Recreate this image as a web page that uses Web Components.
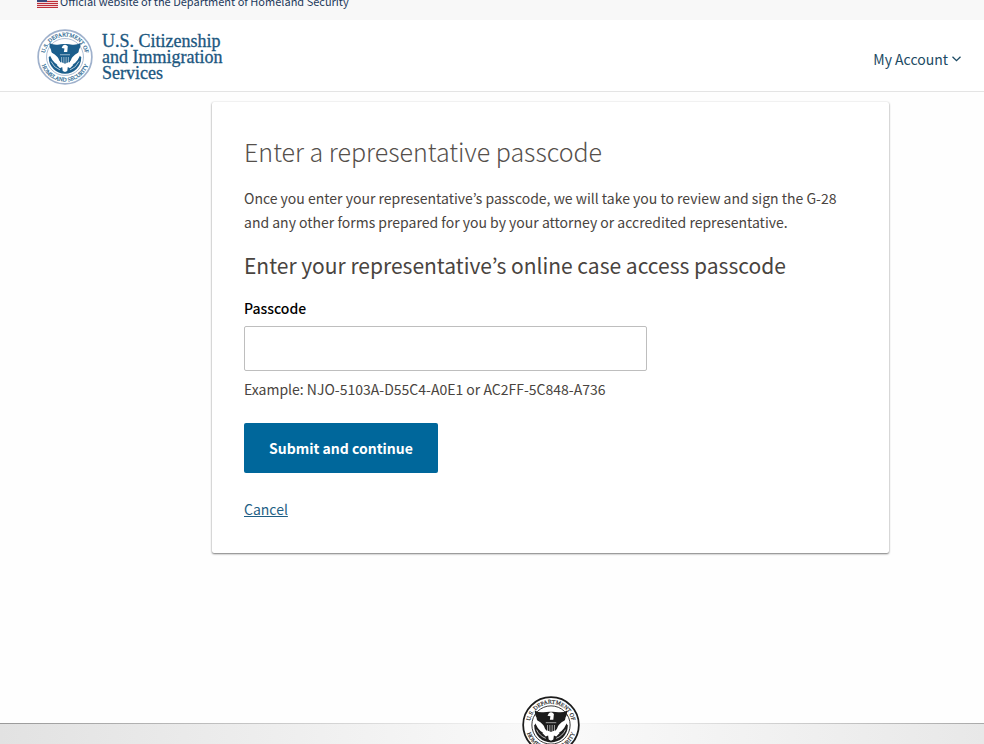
<!DOCTYPE html>
<html lang="en">
<head>
<meta charset="utf-8">
<meta name="viewport" content="width=device-width, initial-scale=1">
<title>Enter a representative passcode | USCIS</title>
<style>
    body {
        margin: 0;
        background: #fefefe;
        color: #494440;
        font: 14px/24px "Noto Sans CJK KR", "Source Sans Pro", sans-serif;
    }
</style>
</head>
<body>
<uscis-page>
    <gov-banner slot="header">Official website of the Department of Homeland Security</gov-banner>
    <site-header slot="header"></site-header>
    <passcode-card>
        <span slot="title">Enter a representative passcode</span>
        <span slot="intro">Once you enter your representative’s passcode, we will take you to review and sign the G-28 and any other forms prepared for you by your attorney or accredited representative.</span>
        <span slot="subtitle">Enter your representative’s online case access passcode</span>
    </passcode-card>
    <site-footer slot="footer"></site-footer>
</uscis-page>

<script>
class ShadowElement extends HTMLElement {
    constructor() {
        super();
        const template = document.createElement('template');
        template.innerHTML = this.constructor.markup;
        this.attachShadow({ mode: 'open' }).appendChild(template.content.cloneNode(true));
    }
}

class DhsSeal extends ShadowElement {
    static markup = `
        <style>
            :host { display: block; width: 56px; height: 56px; color: #1b5e8c; --rim: #9fb1cc; }
            svg { display: block; width: 100%; height: 100%; }
            text { font: 10px "Liberation Serif", serif; fill: currentColor; stroke: currentColor; stroke-width: 0.3px; }
        </style>
        <svg viewBox="-50 -50 100 100" role="img" aria-label="Department of Homeland Security seal">
            <defs>
                <path id="top" d="M-35 11 A36.7 36.7 0 1 1 35 11"/>
                <path id="bottom" d="M-43 8 A43.7 43.7 0 0 0 43 8"/>
            </defs>
            <circle r="48" fill="#fff" stroke="var(--rim)" stroke-width="3"/>
            <text text-anchor="middle"><textPath href="#top" startOffset="50%">U.S. DEPARTMENT OF</textPath></text>
            <text text-anchor="middle"><textPath href="#bottom" startOffset="50%">HOMELAND SECURITY</textPath></text>
            <circle r="33" fill="#fff" stroke="var(--rim)" stroke-width="1.5"/>
            <!-- lower field -->
            <path fill="currentColor" d="M-29 1 A29 29 0 0 0 29 1 L24 -6 H-24Z"/>
            <!-- wings -->
            <path fill="currentColor" d="M-28 -25 Q-20 -21 -13 -22 Q-7 -23 -3 -23 H3 Q7 -23 13 -22 Q20 -21 28 -25 Q28 -17 25 -13 Q24 -4 18 0 L9 11 H-9 L-18 0 Q-24 -4 -25 -13 Q-28 -17 -28 -25Z"/>
            <!-- white flight feathers -->
            <path fill="#fff" d="M-29 -10 Q-17 -7 -10 5 L-6 15 L-13 14 Q-25 7 -29 -10Z M29 -10 Q17 -7 10 5 L6 15 L13 14 Q25 7 29 -10Z"/>
            <!-- branch and arrows -->
            <path fill="none" stroke="#fff" stroke-width="1.2" d="M-25 8 Q-20 19 -9 23 M25 8 Q20 19 9 23"/>
            <!-- head -->
            <path fill="#fff" d="M-6 -16 L-4 -20 Q1 -24 5 -19 L4 -9 L-2 -9 L-1 -15Z"/>
            <!-- shield -->
            <path fill="currentColor" d="M-11 -8 H11 V5 Q8 11 0 15 Q-8 11 -11 5Z"/>
            <path stroke="#fff" stroke-width="1" d="M-9 -4 H9 M-6 0 V10 M-2 0 V12 M2 0 V12 M6 0 V10"/>
            <!-- talons and tail -->
            <path fill="#fff" d="M-15 14 L-7 9 L0 12 L7 9 L15 14 L9 20 L5 18 L4 25 L0 27 L-4 25 L-5 18 L-9 20Z"/>
        </svg>
    `;
}
customElements.define('dhs-seal', DhsSeal);

class GovBanner extends ShadowElement {
    static markup = `
        <style>
            :host {
                display: flex; align-items: flex-end; gap: 2px; box-sizing: border-box;
                height: 20px; padding: 0 37px 12px; overflow: hidden;
                background: #f8f8f8; color: #1d3a5c; font-size: 11px; line-height: 14px;
            }
            svg { flex: none; width: 21px; height: 13px; }
        </style>
        <svg viewBox="0 0 21 13" aria-hidden="true">
            <path fill="#f0d6d8" d="M0 0h21v13H0z"/>
            <path fill="#bf2f3a" d="M0 0h21v1H0zM0 2h21v1H0zM0 4h21v1H0zM0 6h21v1H0zM0 8h21v1H0zM0 10h21v1H0zM0 12h21v1H0z"/>
            <path fill="#39497c" d="M0 0h10v7H0z"/>
        </svg>
        <slot></slot>
    `;
}
customElements.define('gov-banner', GovBanner);

class SiteHeader extends ShadowElement {
    static markup = `
        <style>
            :host {
                display: flex; align-items: center; justify-content: space-between;
                box-sizing: border-box; min-height: 72px; padding: 2px 23px 0 37px;
                border-bottom: 1px solid #e4e4e4; background: #fff;
            }
            .brand { display: flex; align-items: center; gap: 9px; color: #1c5780; text-decoration: none; }
            .name { font: 18px/16px "Liberation Serif", serif; -webkit-text-stroke: 0.3px; }
            .name span { display: block; }
            button {
                display: flex; align-items: center; gap: 4px; padding: 4px 0 0;
                border: 0; background: none; color: #1c4a63; font: inherit; cursor: pointer;
            }
        </style>
        <a class="brand" href="#">
            <dhs-seal></dhs-seal>
            <span class="name"><span>U.S. Citizenship</span><span>and Immigration</span><span>Services</span></span>
        </a>
        <button type="button" aria-haspopup="true">My Account
            <svg width="9" height="6" viewBox="0 0 9 6" fill="none" stroke="currentColor" stroke-width="1.3" aria-hidden="true"><path d="M.5 .7 4.5 4.7 8.5 .7"/></svg>
        </button>
    `;
}
customElements.define('site-header', SiteHeader);

class PasscodeCard extends ShadowElement {
    static markup = `
        <style>
            :host {
                display: block; box-sizing: border-box; padding: 32px;
                background: #fff; border-radius: 2px;
                box-shadow: 0 1px 2px rgba(0, 0, 0, .5), 0 0 2px rgba(0, 0, 0, .1);
            }
            h1, h2, p { margin: 0; }
            h1 { color: #55504c; font-size: 25px; font-weight: 300; line-height: 34px; }
            h2 { margin-top: 14px; font-size: 21px; font-weight: 400; line-height: 34px; }
            .intro { margin-top: 18px; }
            form { display: flex; flex-direction: column; align-items: flex-start; margin-top: 12px; }
            label { margin-bottom: 4px; color: #000; font-weight: 500; line-height: 28px; }
            input {
                box-sizing: border-box; width: 100%; max-width: 403px; height: 45px; padding: 0 12px;
                border: 1px solid #bebebe; border-radius: 2px; background: #fff; font: inherit;
            }
            .hint { margin-top: 6px; }
            button {
                height: 50px; margin: 22px 0 24px; padding: 0 25px; border: 0; border-radius: 2px;
                background: #00679b; color: #fff; font: inherit; font-weight: 700; cursor: pointer;
            }
            a { color: #1f5f85; text-underline-offset: 1px; }
        </style>
        <h1><slot name="title"></slot></h1>
        <p class="intro"><slot name="intro"></slot></p>
        <h2><slot name="subtitle"></slot></h2>
        <form>
            <label for="passcode">Passcode</label>
            <input id="passcode" type="text" autocomplete="off" aria-describedby="hint">
            <p class="hint" id="hint">Example: NJO-5103A-D55C4-A0E1 or AC2FF-5C848-A736</p>
            <button type="submit">Submit and continue</button>
            <a href="#">Cancel</a>
        </form>
    `;
}
customElements.define('passcode-card', PasscodeCard);

class SiteFooter extends ShadowElement {
    static markup = `
        <style>
            :host { display: block; position: relative; height: 21px; background: linear-gradient(90deg, #e2e2e2, #fafafa 56%, #e8e8e8); }
            .rule { height: 1px; background: linear-gradient(90deg, #999, #fafafa 56%, #aaa); }
            /* the seal straddles the rule */
            dhs-seal { position: absolute; left: 56%; bottom: -10px; width: 58px; height: 58px; margin-left: -29px; color: #1c1c1c; --rim: #1c1c1c; }
        </style>
        <div class="rule"></div>
        <dhs-seal></dhs-seal>
    `;
}
customElements.define('site-footer', SiteFooter);

class UscisPage extends ShadowElement {
    static markup = `
        <style>
            :host { display: flex; flex-direction: column; min-height: 100vh; overflow: hidden; }
            main { flex: 1; padding: 10px 95px 48px 212px; }
        </style>
        <slot name="header"></slot>
        <main><slot></slot></main>
        <slot name="footer"></slot>
    `;
}
customElements.define('uscis-page', UscisPage);
</script>
</body>
</html>
